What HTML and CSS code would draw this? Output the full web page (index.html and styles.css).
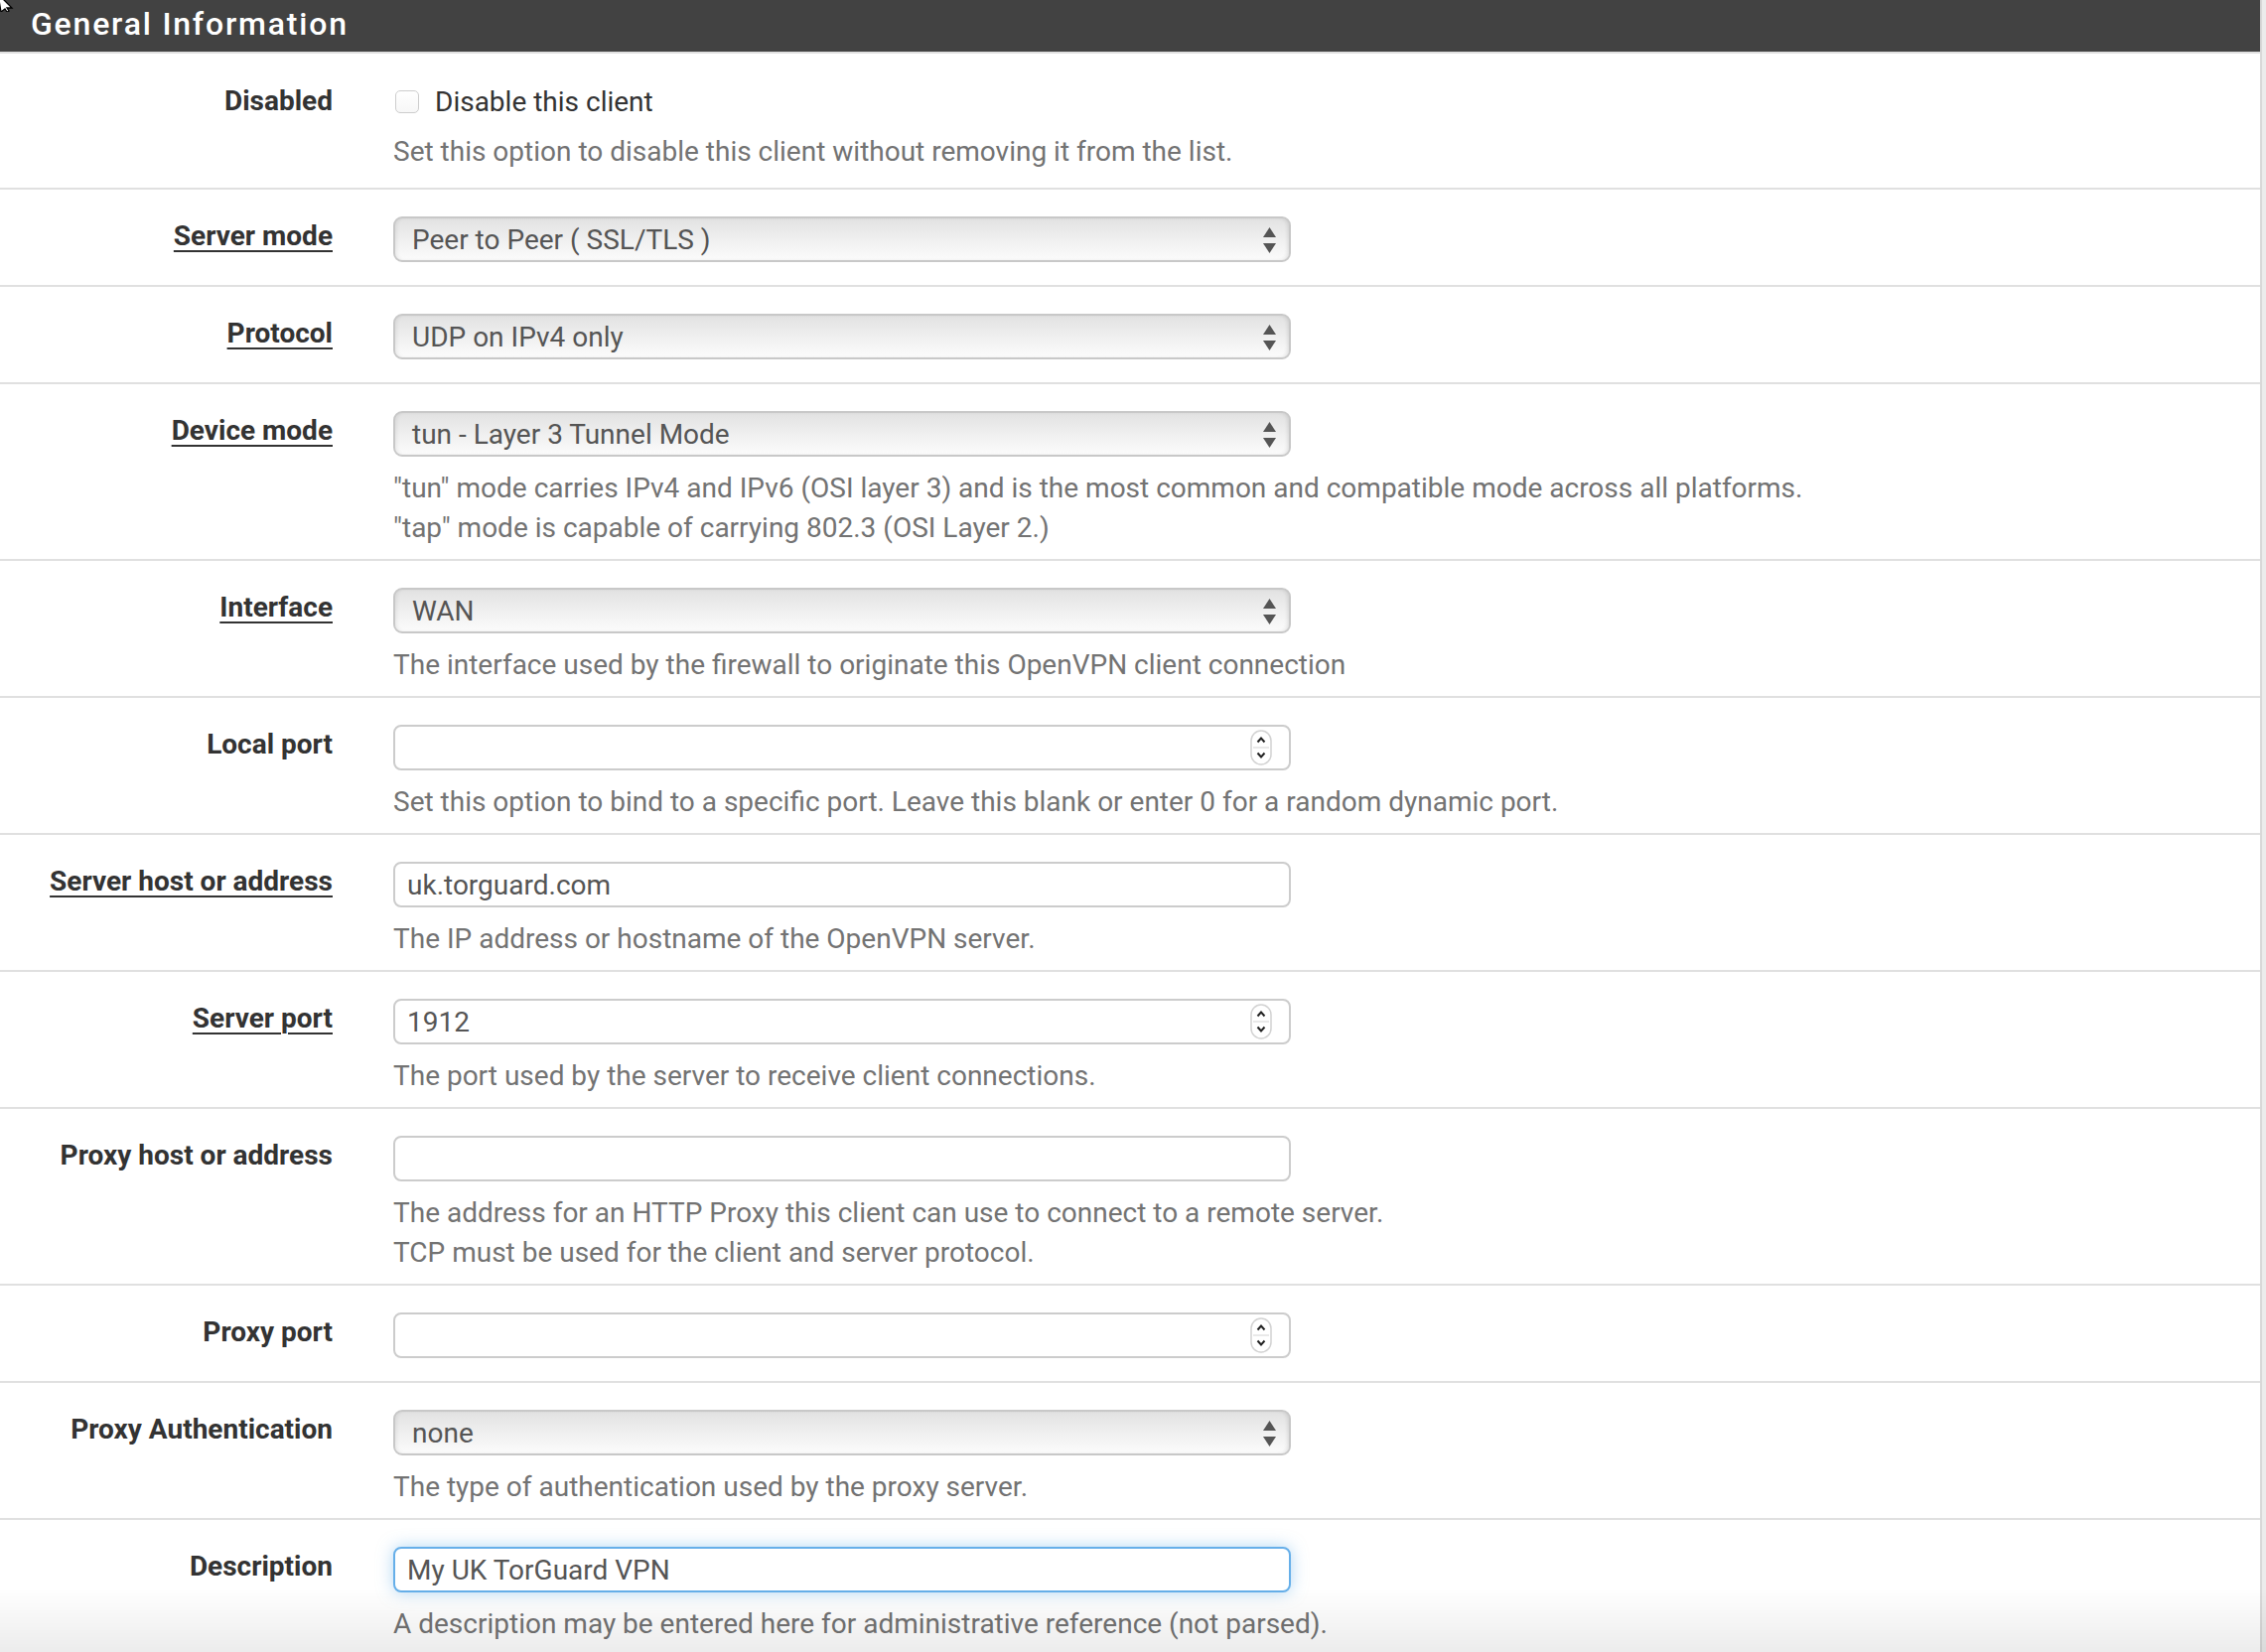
FILE: index.html
```html
<!DOCTYPE html>
<html>
<head>
<meta charset="utf-8">
<title>General Information</title>
<link rel="stylesheet" href="styles.css">
</head>
<body>
<div class="panel">
  <div class="panel-heading"><h2 class="panel-title">General Information</h2></div>
  <div class="panel-body">
    <div class="row first">
      <div class="lbl">Disabled</div>
      <div class="ctrl">
        <label class="check"><span class="cb"></span>Disable this client</label>
        <div class="help">Set this option to disable this client without removing it from the list.</div>
      </div>
    </div>

    <div class="row">
      <div class="lbl"><span class="req">Server mode</span></div>
      <div class="ctrl">
        <div class="select field"><span class="sel-text">Peer to Peer ( SSL/TLS )</span><svg class="arrows" width="13" height="26" viewBox="0 0 13 26"><path d="M6.5 0 L13 10 L0 10 Z" fill="#555"/><path d="M0 16 L13 16 L6.5 26 Z" fill="#555"/></svg></div>
      </div>
    </div>

    <div class="row">
      <div class="lbl"><span class="req">Protocol</span></div>
      <div class="ctrl">
        <div class="select field"><span class="sel-text">UDP on IPv4 only</span><svg class="arrows" width="13" height="26" viewBox="0 0 13 26"><path d="M6.5 0 L13 10 L0 10 Z" fill="#555"/><path d="M0 16 L13 16 L6.5 26 Z" fill="#555"/></svg></div>
      </div>
    </div>

    <div class="row">
      <div class="lbl"><span class="req">Device mode</span></div>
      <div class="ctrl">
        <div class="select field"><span class="sel-text">tun - Layer 3 Tunnel Mode</span><svg class="arrows" width="13" height="26" viewBox="0 0 13 26"><path d="M6.5 0 L13 10 L0 10 Z" fill="#555"/><path d="M0 16 L13 16 L6.5 26 Z" fill="#555"/></svg></div>
        <div class="help">"tun" mode carries IPv4 and IPv6 (OSI layer 3) and is the most common and compatible mode across all platforms.<br>"tap" mode is capable of carrying 802.3 (OSI Layer 2.)</div>
      </div>
    </div>

    <div class="row">
      <div class="lbl"><span class="req">Interface</span></div>
      <div class="ctrl">
        <div class="select field"><span class="sel-text">WAN</span><svg class="arrows" width="13" height="26" viewBox="0 0 13 26"><path d="M6.5 0 L13 10 L0 10 Z" fill="#555"/><path d="M0 16 L13 16 L6.5 26 Z" fill="#555"/></svg></div>
        <div class="help">The interface used by the firewall to originate this OpenVPN client connection</div>
      </div>
    </div>

    <div class="row">
      <div class="lbl">Local port</div>
      <div class="ctrl">
        <div class="input field num"><span class="val"></span><svg class="spin" width="22" height="36" viewBox="0 0 22 36"><rect x="1" y="1" width="20" height="34" rx="10" fill="#fff" stroke="#d2d2d2" stroke-width="1.5"/><line x1="3" y1="18" x2="19" y2="18" stroke="#e2e2e2" stroke-width="1.5"/><path d="M7.5 12.5 L11 8.5 L14.5 12.5" fill="none" stroke="#222" stroke-width="2"/><path d="M7.5 23.5 L11 27.5 L14.5 23.5" fill="none" stroke="#222" stroke-width="2"/></svg></div>
        <div class="help">Set this option to bind to a specific port. Leave this blank or enter 0 for a random dynamic port.</div>
      </div>
    </div>

    <div class="row">
      <div class="lbl"><span class="req">Server host or address</span></div>
      <div class="ctrl">
        <div class="input field"><span class="val">uk.torguard.com</span></div>
        <div class="help">The IP address or hostname of the OpenVPN server.</div>
      </div>
    </div>

    <div class="row">
      <div class="lbl"><span class="req">Server port</span></div>
      <div class="ctrl">
        <div class="input field num"><span class="val">1912</span><svg class="spin" width="22" height="36" viewBox="0 0 22 36"><rect x="1" y="1" width="20" height="34" rx="10" fill="#fff" stroke="#d2d2d2" stroke-width="1.5"/><line x1="3" y1="18" x2="19" y2="18" stroke="#e2e2e2" stroke-width="1.5"/><path d="M7.5 12.5 L11 8.5 L14.5 12.5" fill="none" stroke="#222" stroke-width="2"/><path d="M7.5 23.5 L11 27.5 L14.5 23.5" fill="none" stroke="#222" stroke-width="2"/></svg></div>
        <div class="help">The port used by the server to receive client connections.</div>
      </div>
    </div>

    <div class="row">
      <div class="lbl">Proxy host or address</div>
      <div class="ctrl">
        <div class="input field"><span class="val"></span></div>
        <div class="help">The address for an HTTP Proxy this client can use to connect to a remote server.<br>TCP must be used for the client and server protocol.</div>
      </div>
    </div>

    <div class="row">
      <div class="lbl">Proxy port</div>
      <div class="ctrl">
        <div class="input field num"><span class="val"></span><svg class="spin" width="22" height="36" viewBox="0 0 22 36"><rect x="1" y="1" width="20" height="34" rx="10" fill="#fff" stroke="#d2d2d2" stroke-width="1.5"/><line x1="3" y1="18" x2="19" y2="18" stroke="#e2e2e2" stroke-width="1.5"/><path d="M7.5 12.5 L11 8.5 L14.5 12.5" fill="none" stroke="#222" stroke-width="2"/><path d="M7.5 23.5 L11 27.5 L14.5 23.5" fill="none" stroke="#222" stroke-width="2"/></svg></div>
      </div>
    </div>

    <div class="row">
      <div class="lbl">Proxy Authentication</div>
      <div class="ctrl">
        <div class="select field"><span class="sel-text">none</span><svg class="arrows" width="13" height="26" viewBox="0 0 13 26"><path d="M6.5 0 L13 10 L0 10 Z" fill="#555"/><path d="M0 16 L13 16 L6.5 26 Z" fill="#555"/></svg></div>
        <div class="help">The type of authentication used by the proxy server.</div>
      </div>
    </div>

    <div class="row last">
      <div class="lbl">Description</div>
      <div class="ctrl">
        <div class="input field focus"><span class="val">My UK TorGuard VPN</span></div>
        <div class="help">A description may be entered here for administrative reference (not parsed).</div>
      </div>
    </div>
  </div>
</div>
<div class="shade"></div>
<svg class="cursor" width="16" height="12" viewBox="0 0 16 12"><path d="M-2 -6 L12 8 L7 8 L9 11 L7 12 L5 9 L1 12 Z" fill="#fff" stroke="#000" stroke-width="1.3"/></svg>
</body>
</html>
```

FILE: styles.css
```css
html, body {
  margin: 0;
  padding: 0;
}
body {
  background: #ececec;
  font-family: Roboto, "Liberation Sans", sans-serif;
  color: #333;
  height: 1664px;
  overflow: hidden;
}
.panel {
  width: 2276px;
  background: #fff;
  border-right: 2px solid #d8d8d8;
  min-height: 1664px;
}
.panel-heading {
  background: #424242;
  border-bottom: 2px solid #e0e0e0;
  padding: 0 0 4px 31px;
  box-sizing: content-box;
  height: 48px;
  display: flex;
  align-items: center;
}
.panel-title {
  margin: 0;
  color: #fff;
  font-size: 32px;
  font-weight: 500;
  letter-spacing: 1.8px;
  line-height: 1;
}
.row {
  display: flex;
  padding: 27px 0 11px;
  border-bottom: 2px solid #e0e0e0;
}
.row.first {
  padding-top: 28px;
  padding-bottom: 16px;
}
.row.last {
  border-bottom: none;
}
.lbl {
  width: 335px;
  flex: none;
  text-align: right;
  font-weight: 700;
  font-size: 28px;
  line-height: 40px;
  color: #333;
}
.req {
  text-decoration: underline;
  text-decoration-thickness: 2px;
  text-underline-offset: 5px;
}
.ctrl {
  margin-left: 61px;
  display: flex;
  flex-direction: column;
  align-items: flex-start;
}
.check {
  display: flex;
  align-items: center;
  height: 40px;
  font-size: 28px;
  color: #333;
  margin-bottom: 11px;
}
.cb {
  width: 24px;
  height: 23px;
  box-sizing: border-box;
  border: 1.5px solid #cdcdcd;
  border-radius: 5px;
  background: linear-gradient(#fff, #f7f7f7);
  margin: 0 16px 0 2px;
}
.field {
  width: 904px;
  height: 46px;
  box-sizing: border-box;
  margin-bottom: 12px;
  position: relative;
  display: flex;
  align-items: center;
  font-size: 28px;
  color: #555;
}
.select {
  border: 2px solid #c8c8c8;
  border-radius: 9px;
  background: linear-gradient(#e2e2e2, #f2f2f2 60%, #fbfbfb);
  box-shadow: inset 3px 0 4px -2px rgba(0,0,0,0.08), inset -3px 0 4px -2px rgba(0,0,0,0.12);
  padding-left: 17px;
}
.sel-text {
  color: #555;
}
.arrows {
  position: absolute;
  right: 13px;
  top: 9px;
}
.input {
  border: 2px solid #cccccc;
  border-radius: 8px;
  background: #fff;
  padding-left: 12px;
}
.input .val {
  color: #555;
}
.input.focus {
  border-color: #66afe9;
  box-shadow: 0 0 16px rgba(102, 175, 233, 0.5);
}
.spin {
  position: absolute;
  right: 17px;
  top: 3px;
}
.help {
  font-size: 28px;
  line-height: 40px;
  color: #737373;
  white-space: nowrap;
}
.shade {
  position: fixed;
  left: 0;
  right: 0;
  bottom: 0;
  height: 64px;
  background: linear-gradient(rgba(0,0,0,0), rgba(0,0,0,0.075));
  pointer-events: none;
}
.cursor {
  position: fixed;
  left: 0;
  top: 0;
}
```
